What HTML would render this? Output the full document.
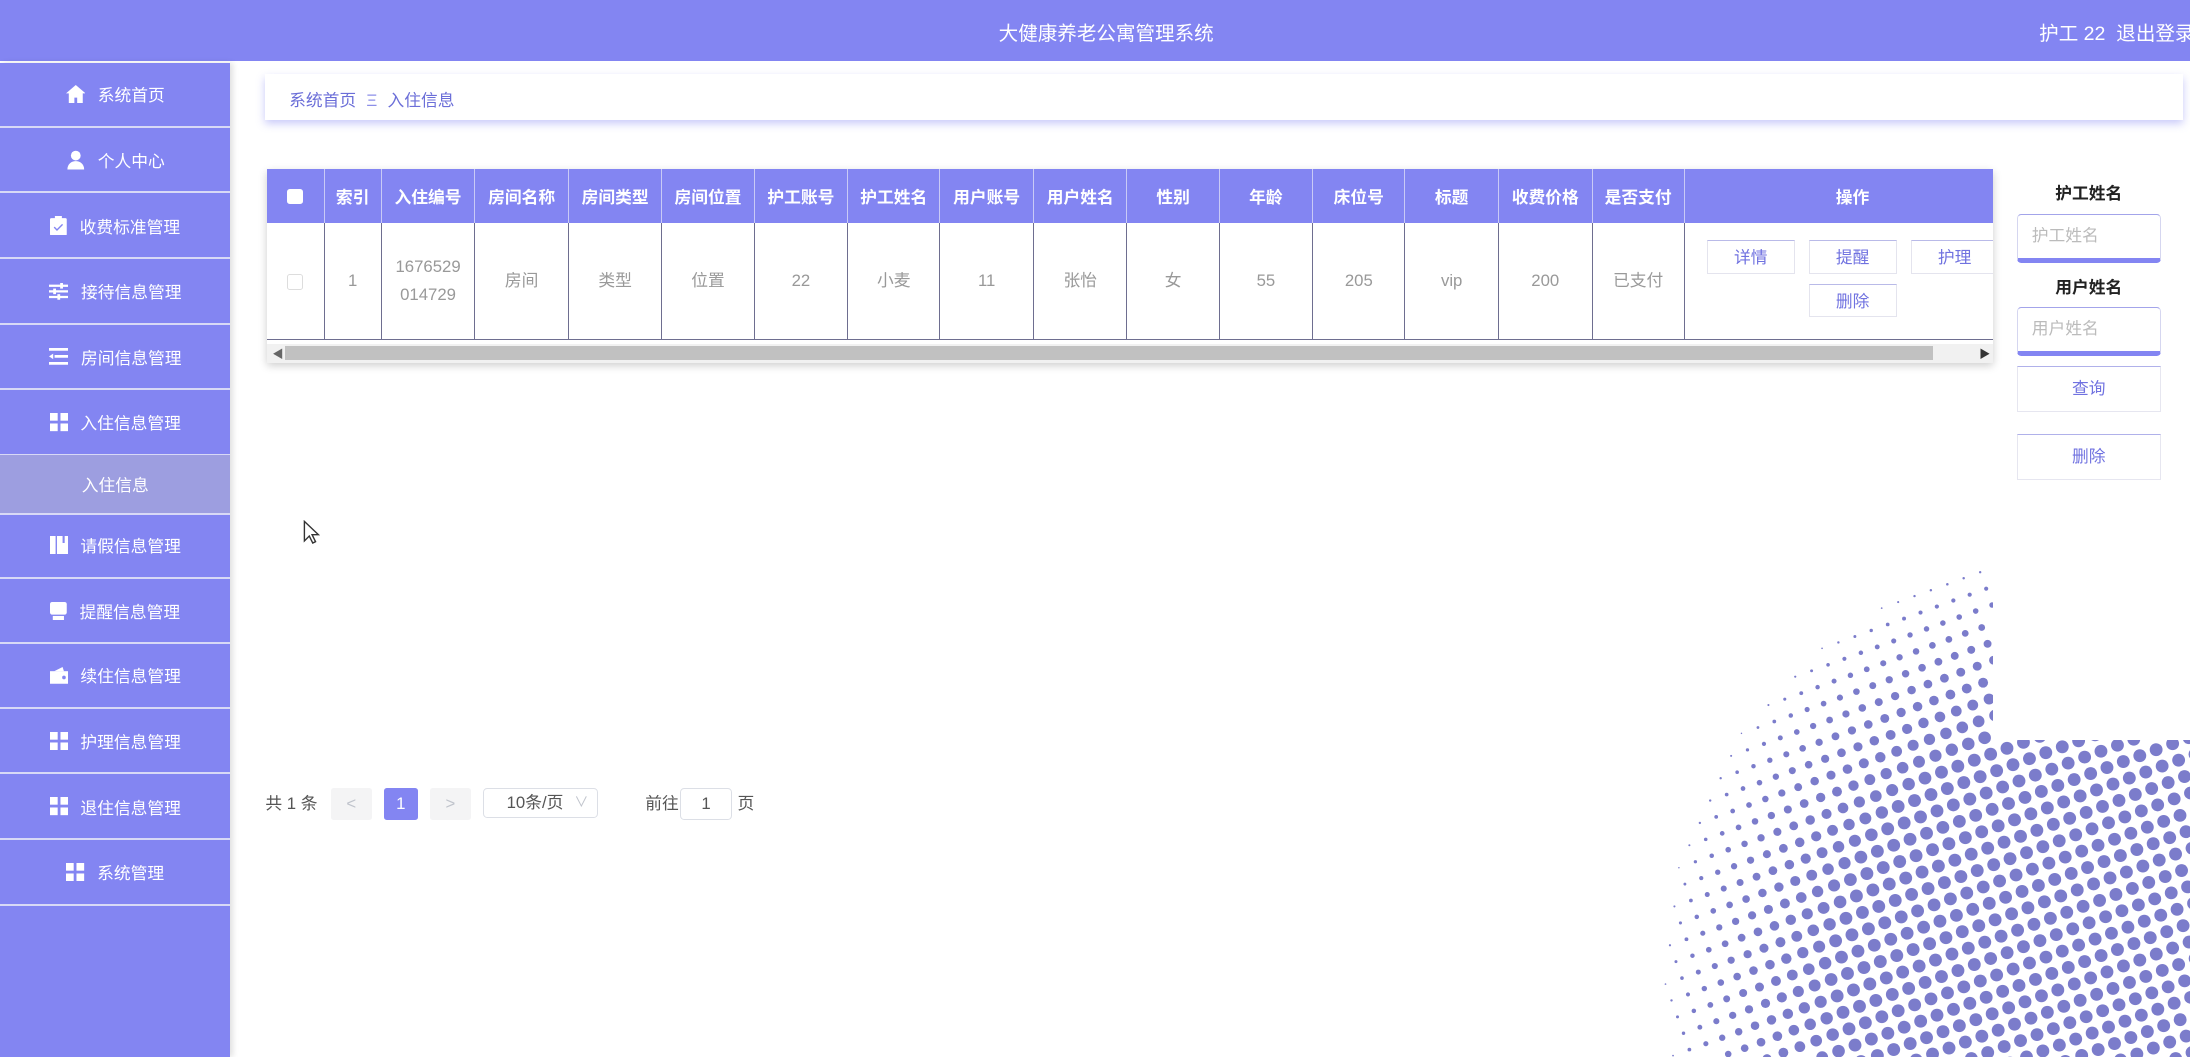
<!DOCTYPE html>
<html><head><meta charset="utf-8">
<style>
html,body{margin:0;padding:0;width:2190px;height:1057px;overflow:hidden;background:#fff;}
#w{position:absolute;left:0;top:0;width:1568px;height:757px;zoom:1.39668;font-family:"Liberation Sans","Noto Sans CJK SC",sans-serif;font-size:12px;background:#fff;}
.a{position:absolute;}
#hdr{left:0;top:0;width:1568px;height:44px;background:#8385f2;color:#fff;}
#side{left:0;top:45px;width:165px;height:712px;background:#8385f2;box-shadow:2px 0 4px rgba(0,0,0,.12);}
.it{position:absolute;left:0;width:165px;height:45px;border-bottom:1.5px solid #d8d9f6;color:#fff;display:flex;align-items:center;justify-content:center;font-size:12px;}
.it svg{margin-right:9px;}
.sub{background:#9d9ee0;}
table{border-collapse:collapse;table-layout:fixed;width:1256px;}
th{background:#8385f2;color:#fff;font-weight:bold;height:39px;border-right:1px solid #c9caf6;font-size:12px;padding:0;}
td{height:83px;border-right:1px solid #6e6e90;border-bottom:1px solid #6e6e90;color:#999;text-align:center;font-size:12px;padding:0;line-height:20px;}
.btn{position:absolute;width:63px;height:24px;border:1px solid #e4e4ee;border-top:1px solid #b9bae8;background:#fff;color:#7072e0;font-size:12px;text-align:center;line-height:24px;box-sizing:border-box;}
.lab{position:absolute;left:1444px;width:103px;text-align:center;font-weight:bold;color:#222;font-size:12px;}
.inp{position:absolute;left:1444px;width:103px;height:35px;box-sizing:border-box;border:1px solid #d5d6f0;border-top:1px solid #a3a4ea;border-bottom:4px solid #8385f2;border-radius:3px;color:#bbb;padding-left:10px;line-height:30px;}
.rb{position:absolute;left:1444px;width:103px;height:33px;box-sizing:border-box;border:1px solid #e6e6f0;border-top:1px solid #b0b1ea;color:#7072e0;text-align:center;line-height:31px;background:#fff;}
.pg{position:absolute;top:564px;height:23px;line-height:23px;text-align:center;font-size:12px;}
</style></head><body>
<div id="w">
<div id="hdr" class="a">
 <div class="a" style="left:8px;width:1568px;top:12px;text-align:center;font-size:14px;">大健康养老公寓管理系统</div>
 <div class="a" style="left:1460px;top:12px;font-size:14px;white-space:nowrap;">护工 22&nbsp;&nbsp;退出登录</div>
</div>
<div id="side" class="a">
 <div class="it" style="top:0"><svg width="14" height="13" viewBox="0 0 14 13"><path d="M7 0L0 6h2v7h4V9h2v4h4V6h2z" fill="#fff"/></svg>系统首页</div>
 <div class="it" style="top:47px"><svg width="14" height="14" viewBox="0 0 14 14"><circle cx="7" cy="4" r="3.5" fill="#fff"/><path d="M1 14c0-4 3-6 6-6s6 2 6 6z" fill="#fff"/></svg>个人中心</div>
 <div class="it" style="top:94px"><svg width="12" height="14" viewBox="0 0 12 14"><rect x="0" y="1.5" width="12" height="12.5" rx="1" fill="#fff"/><rect x="3.5" y="0" width="5" height="3" fill="#fff"/><path d="M3 8l2 2 4-4" stroke="#8385f2" fill="none"/></svg>收费标准管理</div>
 <div class="it" style="top:141px"><svg width="14" height="12" viewBox="0 0 14 12"><path d="M0 2h14M0 6h14M0 10h14" stroke="#fff" stroke-width="1.6"/><rect x="8" y="0" width="2" height="4" fill="#fff"/><rect x="3" y="4" width="2" height="4" fill="#fff"/><rect x="6" y="8" width="2" height="4" fill="#fff"/></svg>接待信息管理</div>
 <div class="it" style="top:188px"><svg width="14" height="12" viewBox="0 0 14 12"><path d="M0 1h14M4 6h10M0 11h14" stroke="#fff" stroke-width="2"/><path d="M0 6l3-2v4z" fill="#fff"/></svg>房间信息管理</div>
 <div class="it" style="top:235px"><svg width="13" height="13" viewBox="0 0 13 13"><rect width="5.5" height="5.5" fill="#fff"/><rect x="7.5" width="5.5" height="5.5" fill="#fff"/><rect y="7.5" width="5.5" height="5.5" fill="#fff"/><rect x="7.5" y="7.5" width="5.5" height="5.5" fill="#fff"/></svg>入住信息管理</div>
 <div class="it sub" style="top:281px;height:41px;">入住信息</div>
 <div class="it" style="top:323px"><svg width="13" height="13" viewBox="0 0 13 13"><rect width="4" height="13" fill="#fff"/><rect x="5" width="8" height="13" fill="#fff"/><rect x="9" y="0" width="1.5" height="5" fill="#8385f2"/></svg>请假信息管理</div>
 <div class="it" style="top:370px"><svg width="12" height="13" viewBox="0 0 12 13"><rect width="12" height="9" rx="1.5" fill="#fff"/><rect x="2" y="10" width="8" height="3" fill="#fff"/></svg>提醒信息管理</div>
 <div class="it" style="top:416px"><svg width="13" height="12" viewBox="0 0 13 12"><rect y="3" width="13" height="9" fill="#fff"/><path d="M3 3l6-3 1 3z" fill="#fff"/><circle cx="10" cy="7.5" r="1.3" fill="#8385f2"/></svg>续住信息管理</div>
 <div class="it" style="top:463px"><svg width="13" height="13" viewBox="0 0 13 13"><rect width="5.5" height="5.5" fill="#fff"/><rect x="7.5" width="5.5" height="5.5" fill="#fff"/><rect y="7.5" width="5.5" height="5.5" fill="#fff"/><rect x="7.5" y="7.5" width="5.5" height="5.5" fill="#fff"/></svg>护理信息管理</div>
 <div class="it" style="top:510px"><svg width="13" height="13" viewBox="0 0 13 13"><rect width="5.5" height="5.5" fill="#fff"/><rect x="7.5" width="5.5" height="5.5" fill="#fff"/><rect y="7.5" width="5.5" height="5.5" fill="#fff"/><rect x="7.5" y="7.5" width="5.5" height="5.5" fill="#fff"/></svg>退住信息管理</div>
 <div class="it" style="top:557px"><svg width="13" height="13" viewBox="0 0 13 13"><rect width="5.5" height="5.5" fill="#fff"/><rect x="7.5" width="5.5" height="5.5" fill="#fff"/><rect y="7.5" width="5.5" height="5.5" fill="#fff"/><rect x="7.5" y="7.5" width="5.5" height="5.5" fill="#fff"/></svg>系统管理</div>
</div>

<!-- dots -->
<svg class="a" id="dots" style="left:1150px;top:380px;" width="418" height="377" viewBox="1150 380 418 377"></svg>
<div class="a" style="left:1427px;top:380px;width:141px;height:150px;background:#fff;"></div>

<!-- breadcrumb -->
<div class="a" style="left:190px;top:53px;width:1373px;height:33px;background:#fff;box-shadow:0 3px 6px rgba(131,133,242,.45);"></div>
<div class="a" style="left:207px;top:62px;color:#6b6ed8;font-size:12px;">系统首页 <span style="color:#8d8fe8;margin:0 4px;">Ξ</span> 入住信息</div>

<!-- table -->
<div class="a" style="left:191px;top:121px;width:1236px;height:139px;overflow:hidden;box-shadow:0 2px 6px rgba(0,0,0,.2);background:#fff;">
<table>
<colgroup><col style="width:41px"><col style="width:41px"><col style="width:67px"><col style="width:67px"><col style="width:67px"><col style="width:66px"><col style="width:67px"><col style="width:66px"><col style="width:67px"><col style="width:67px"><col style="width:66px"><col style="width:67px"><col style="width:66px"><col style="width:67px"><col style="width:67px"><col style="width:66px"><col style="width:241px"></colgroup>
<tr><th><span style="display:inline-block;width:11px;height:11px;background:#fff;border-radius:2px;vertical-align:middle"></span></th><th>索引</th><th>入住编号</th><th>房间名称</th><th>房间类型</th><th>房间位置</th><th>护工账号</th><th>护工姓名</th><th>用户账号</th><th>用户姓名</th><th>性别</th><th>年龄</th><th>床位号</th><th>标题</th><th>收费价格</th><th>是否支付</th><th>操作</th></tr>
<tr><td><span style="display:inline-block;width:10px;height:10px;border:1px solid #ddd;border-radius:2px;vertical-align:middle"></span></td><td>1</td><td>1676529<br>014729</td><td>房间</td><td>类型</td><td>位置</td><td>22</td><td>小麦</td><td>11</td><td>张怡</td><td>女</td><td>55</td><td>205</td><td>vip</td><td>200</td><td>已支付</td><td style="position:relative"></td></tr>
</table>
<div class="a" style="left:0;top:125px;width:1236px;height:14px;background:#f1f1f1;"></div>
<div class="a" style="left:13px;top:127px;width:1180px;height:10px;background:#c1c1c1;"></div>
<div class="a" style="left:4px;top:127px;font-size:8px;color:#666;">◀</div>
<div class="a" style="left:1226px;top:127px;font-size:8px;color:#333;">▶</div>
<div class="btn" style="left:1031px;top:51px;">详情</div>
<div class="btn" style="left:1104px;top:51px;">提醒</div>
<div class="btn" style="left:1177px;top:51px;">护理</div>
<div class="btn" style="left:1104px;top:82px;">删除</div>
</div>

<!-- right panel -->
<div class="lab" style="top:129px;">护工姓名</div>
<div class="inp" style="top:153px;">护工姓名</div>
<div class="lab" style="top:196px;">用户姓名</div>
<div class="inp" style="top:220px;">用户姓名</div>
<div class="rb" style="top:262px;">查询</div>
<div class="rb" style="top:311px;">删除</div>

<!-- pagination -->
<div class="pg" style="left:190px;color:#555;">共 1 条</div>
<div class="pg" style="left:237px;width:29px;background:#f4f4f5;color:#c0c4cc;border-radius:2px;">&lt;</div>
<div class="pg" style="left:275px;width:24px;background:#8385f2;color:#fff;border-radius:2px;">1</div>
<div class="pg" style="left:308px;width:29px;background:#f4f4f5;color:#c0c4cc;border-radius:2px;">&gt;</div>
<div class="pg" style="left:346px;width:82px;height:22px;border:1px solid #dcdfe6;border-radius:3px;color:#555;box-sizing:border-box;line-height:20px;text-align:left;padding-left:16px;">10条/页<span style="position:absolute;right:6px;color:#c0c4cc;font-size:10px;">∨</span></div>
<div class="pg" style="left:462px;color:#555;">前往</div>
<div class="pg" style="left:487px;width:37px;border:1px solid #dcdfe6;border-radius:3px;box-sizing:border-box;line-height:21px;color:#555;">1</div>
<div class="pg" style="left:528px;color:#555;">页</div>

<svg class="a" style="left:217px;top:372px" width="12" height="18" viewBox="0 0 12 18"><path d="M1 1v14l3.5-3.5 2.5 5 2-1-2.5-5H11z" fill="#fff" stroke="#333" stroke-width="1"/></svg>
</div>
<script>
(function(){
var s=document.getElementById('dots'),cx=1497,cy=700,R=306,sp=12.5,h='';
var a=20*Math.PI/180,ca=Math.cos(a),sa=Math.sin(a);
for(var i=-60;i<=60;i++)for(var j=-60;j<=60;j++){
 var u=i*sp,v=j*sp;
 var x=cx+u*ca+v*sa,y=cy-u*sa+v*ca;
 if(x<1150||x>1575||y<380||y>765)continue;
 var d=Math.sqrt((x-cx)*(x-cx)+(y-cy)*(y-cy));
 if(d>R)continue;
 var t=1-d/R;var r=Math.min(4.6,0.4+8*Math.pow(t,0.7));
 h+='<circle cx="'+x.toFixed(1)+'" cy="'+y.toFixed(1)+'" r="'+r.toFixed(2)+'"/>';
}
s.innerHTML='<g fill="#7b7ccb">'+h+'</g>';
})();
</script>
</body></html>
